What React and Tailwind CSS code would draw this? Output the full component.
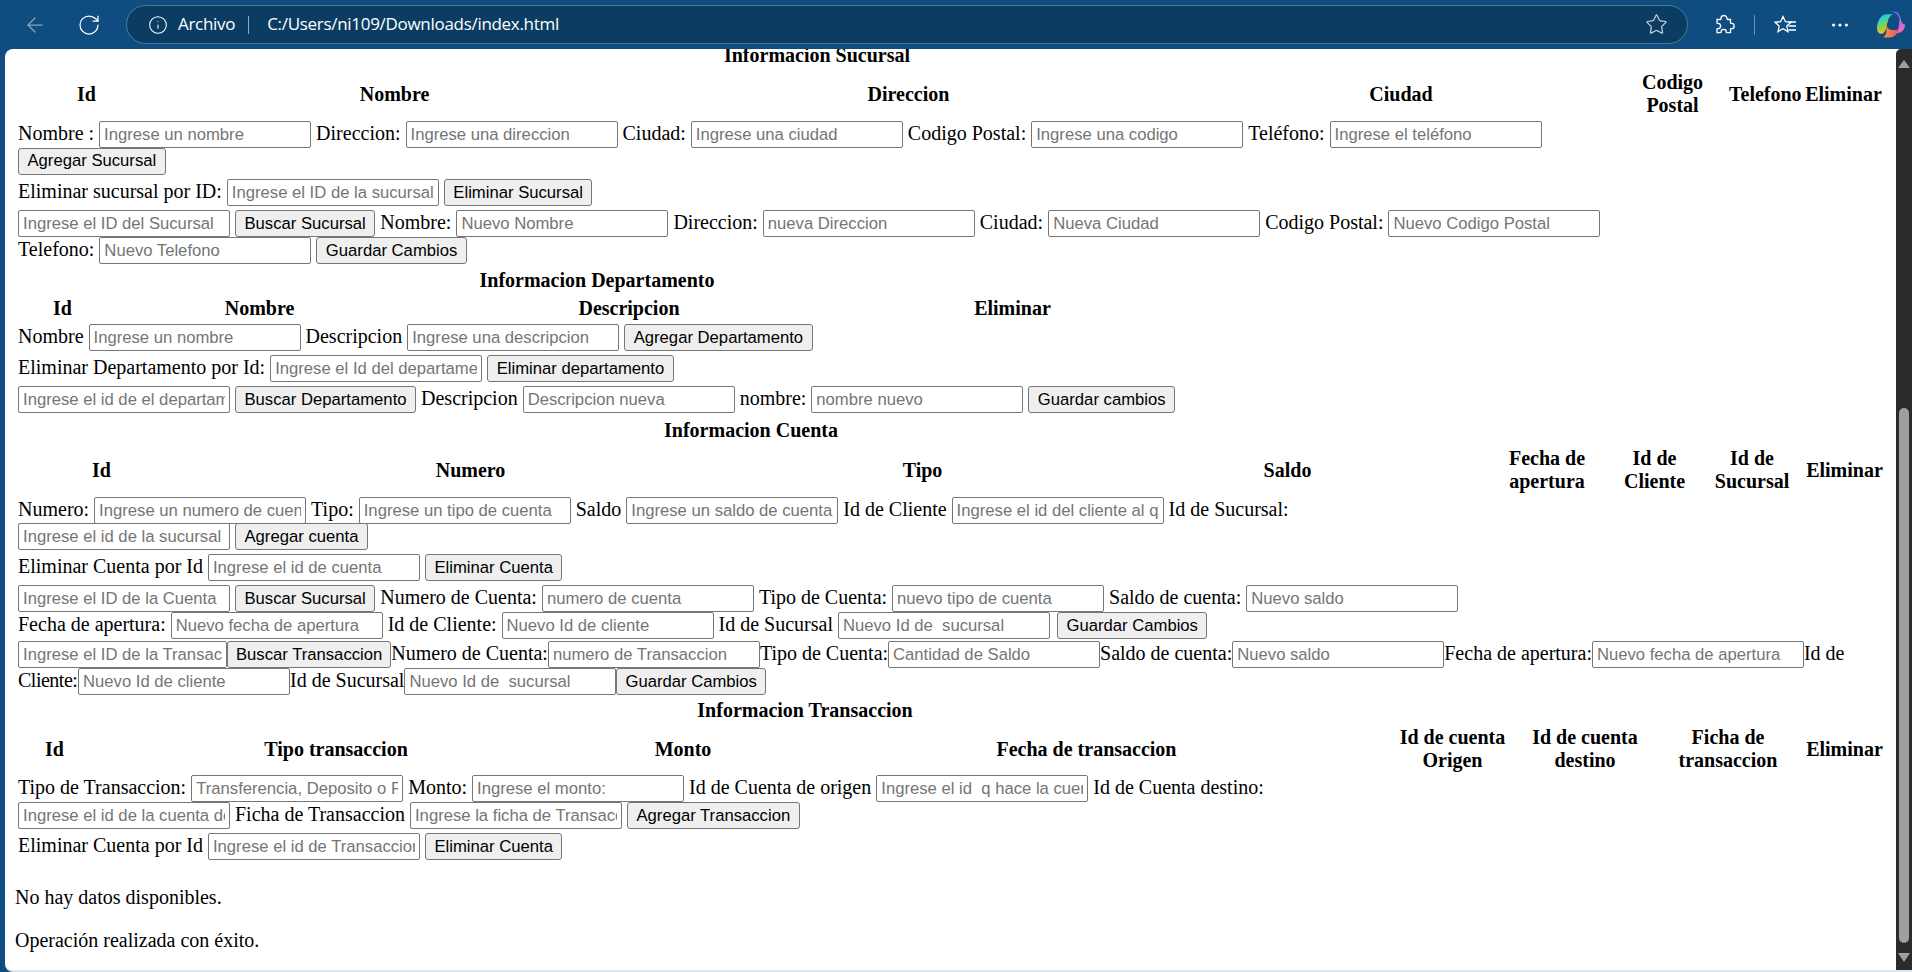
import React from "react";
import { ArrowLeft, RotateCw, Info, Star, MoreHorizontal } from "lucide-react";

const I = ({ p, narrow }) => (
  <input
    readOnly
    placeholder={p}
    className={`${narrow ? "w-[209px]" : "w-[212px]"} h-[27px] shrink-0 border border-[#767676] rounded-[2px] bg-white px-1 text-[16.67px] placeholder:text-[#757575] outline-none font-['Liberation_Sans',Arial,sans-serif]`}
  />
);
const B = ({ children, compact, className = "" }) => (
  <button className={`h-[27px] shrink-0 border border-[#767676] rounded-[3px] bg-[#efefef] ${compact ? "px-[8px]" : "px-[8.5px]"} text-[16.67px] text-black leading-none whitespace-nowrap font-['Liberation_Sans',Arial,sans-serif] ${className}`}>
    {children}
  </button>
);
const L = ({ children, tight, className = "" }) => (
  <div className={`flex items-baseline h-[27px] ml-[18px] whitespace-nowrap ${tight ? "gap-0" : "gap-[5px]"} ${className}`}>{children}</div>
);
const Caption = ({ w, children }) => (
  <div className="font-bold text-center h-[23px] leading-[23px]" style={{ width: w }}>{children}</div>
);
const Table = ({ cols, heads, w, className = "" }) => (
  <table className={`table-fixed border-separate border-spacing-[2px] ml-[16px] font-bold ${className}`} style={{ width: w }}>
    <colgroup>{cols.map((c, i) => <col key={i} style={{ width: c }} />)}</colgroup>
    <thead>
      <tr>
        {heads.map((h, i) => (
          <th key={i} className="p-px leading-[23px] py-[2px] text-center font-bold">{h}</th>
        ))}
      </tr>
    </thead>
  </table>
);

function Edge() {
  return (
    <div className="h-[49px] bg-[#0f4c7f] flex items-center shrink-0 text-white">
      <div className="w-[70px] flex justify-center opacity-50"><ArrowLeft size={24} strokeWidth={1.25} /></div>
      <div className="w-[38px] flex justify-center"><RotateCw size={24} strokeWidth={1.25} /></div>
      <div className="ml-[18px] h-[39px] w-[1562px] rounded-full bg-[#0b3d63] border border-[#4f7a9b] flex items-center text-[17px] font-['Open_Sans',sans-serif] tracking-[-0.3px]">
        <Info size={20} strokeWidth={1.25} className="ml-[21px]" />
        <span className="ml-[10px] -mt-[1px]">Archivo</span>
        <span className="ml-[13px] w-px h-[18px] bg-[#8fa9bf]" />
        <span className="ml-[18px] -mt-[1px]">C:/Users/ni109/Downloads/index.html</span>
        <Star size={23} strokeWidth={1.25} className="ml-auto mr-[19px] text-[#c8d4de]" />
      </div>
      <svg width="22" height="22" viewBox="0 0 22 22" fill="none" stroke="white" strokeWidth="1.3" className="ml-[25px]">
        <path d="M8 4.500a3 3 0 0 1 6 0c0 .6 0 .9.3 1h3.200v3.400c0 .3.500.4 1 .4a2.700 2.700 0 0 1 0 5.400c-.5 0-1 .1-1 .4v3.600h-3.800c-.4 0-.4-.4-.4-.8a2.600 2.600 0 0 0-5.200 0c0 .4 0 .8-.4.8H4v-3.600c0-.4.400-.4.900-.4a2.700 2.700 0 0 0 0-5.400c-.5 0-.9 0-.9-.4V5.500h3.700c.3 0 .3-.4.300-1z" />
      </svg>
      <span className="ml-[19px] w-px h-[20px] bg-[#6d93b0]" />
      <svg width="24" height="22" viewBox="0 0 24 22" fill="none" stroke="white" strokeWidth="1.3" className="ml-[18px]">
        <path d="M10 2.500l2.400 5.200 5.600.6-4.200 3.800 1.200 5.500-5-2.900-5 2.900 1.200-5.500L2 8.300l5.600-.6z" />
        <path d="M16 8h7M15.500 12h7.500M15.500 16h7.500" />
      </svg>
      <MoreHorizontal size={22} strokeWidth={1.5} className="ml-[32px]" />
      <svg width="28" height="27" viewBox="0 0 30 28" className="ml-[26px] mt-[-1px]">
        <defs>
          <linearGradient id="ca" x1="0" y1="0" x2="0.4" y2="1"><stop offset="0" stopColor="#2f9fe8" /><stop offset="0.35" stopColor="#37d6c0" /><stop offset="0.65" stopColor="#8fd13f" /><stop offset="1" stopColor="#f6c431" /></linearGradient>
          <linearGradient id="cb" x1="0" y1="0" x2="0.6" y2="1"><stop offset="0" stopColor="#1c6fe0" /><stop offset="0.5" stopColor="#9b6de8" /><stop offset="1" stopColor="#f06ac0" /></linearGradient>
          <linearGradient id="cc" x1="0" y1="0" x2="1" y2="0"><stop offset="0" stopColor="#f6a13a" /><stop offset="1" stopColor="#ee4f63" /></linearGradient>
        </defs>
        <path d="M10 3h8c-3 .5-5 2.500-6 6l-2.500 9.500C8.500 22 7 24 4.500 24 2 24 0 21.500 0 18 0 11 4 3 10 3z" fill="url(#ca)" />
        <path d="M13 0h6c3 0 4.500 2 5.500 5l1.500 5c1 3 2 4 4 4 0 5-3 9-8 9h-3c3-1.500 4-4 4.500-8l.5-6c.3-4-3-8-11-9z" fill="url(#cb)" />
        <path d="M10 13c.5 5 3 7 7 7h6c-1 4.500-5 8-10 8H5c3 0 4.500-2.500 5-6z" fill="url(#cc)" />
      </svg>
    </div>
  );
}

export default function App() {
  return (
    <div className="h-[972px] w-[1912px] overflow-hidden bg-[#0f4c7f] flex flex-col">
      <Edge />
      <div className="flex-1 ml-[5px] border-b-2 border-b-[#dfe7ee] flex rounded-tl-[8px] rounded-bl-[8px] overflow-hidden bg-white relative">
        <main className="flex-1 overflow-hidden font-['Liberation_Serif','Times_New_Roman',serif] text-[20px] leading-[23px] text-black">
          <div className="-ml-[5px] -mt-[5px]">
            <Caption w={1634}>Informacion Sucursal</Caption>
            <Table
              w={1869}
              cols={[137, 475, 549, 432, 107, 74, 79]}
              heads={["Id", "Nombre", "Direccion", "Ciudad", "Codigo Postal", "Telefono", "Eliminar"]}
            />
            <L><span>Nombre :</span><I p="Ingrese un nombre" /><span>Direccion:</span><I p="Ingrese una direccion" /><span>Ciudad:</span><I p="Ingrese una ciudad" /><span>Codigo Postal:</span><I p="Ingrese una codigo" /><span>Teléfono:</span><I p="Ingrese el teléfono" /></L>
            <L><B>Agregar Sucursal</B></L>
            <L className="mt-[4px]"><span>Eliminar sucursal por ID:</span><I p="Ingrese el ID de la sucursal" /><B>Eliminar Sucursal</B></L>
            <L className="mt-[4px]"><I p="Ingrese el ID del Sucursal" /><B>Buscar Sucursal</B><span>Nombre:</span><I p="Nuevo Nombre" /><span>Direccion:</span><I p="nueva Direccion" /><span>Ciudad:</span><I p="Nueva Ciudad" /><span>Codigo Postal:</span><I p="Nuevo Codigo Postal" /></L>
            <L><span>Telefono:</span><I p="Nuevo Telefono" /><B>Guardar Cambios</B></L>

            <div className="mt-[5px]"><Caption w={1194}>Informacion Departamento</Caption></div>
            <Table className="mt-[1px]" w={1163} cols={[89, 301, 434, 329]} heads={["Id", "Nombre", "Descripcion", "Eliminar"]} />
            <L><span>Nombre</span><I p="Ingrese un nombre" /><span>Descripcion</span><I p="Ingrese una descripcion" /><B>Agregar Departamento</B></L>
            <L className="mt-[4px]"><span>Eliminar Departamento por Id:</span><I p="Ingrese el Id del departamento" /><B>Eliminar departamento</B></L>
            <L className="mt-[4px]"><I p="Ingrese el id de el departamento" /><B>Buscar Departamento</B><span>Descripcion</span><I p="Descripcion nueva" /><span>nombre:</span><I p="nombre nuevo" /><B>Guardar cambios</B></L>

            <div className="mt-[6px]"><Caption w={1502}>Informacion Cuenta</Caption></div>
            <Table className="mt-[1px]" w={1870} cols={[167, 567, 333, 393, 122, 89, 102, 79]} heads={["Id", "Numero", "Tipo", "Saldo", "Fecha de apertura", "Id de Cliente", "Id de Sucursal", "Eliminar"]} />
            <L><span>Numero:</span><I p="Ingrese un numero de cuenta" /><span>Tipo:</span><I p="Ingrese un tipo de cuenta" /><span>Saldo</span><I p="Ingrese un saldo de cuenta" /><span>Id de Cliente</span><I p="Ingrese el id del cliente al que pertenece" /><span>Id de Sucursal:</span></L>
            <L className="-mt-[1px]"><I p="Ingrese el id de la sucursal" /><B>Agregar cuenta</B></L>
            <L className="mt-[4px]"><span>Eliminar Cuenta por Id</span><I p="Ingrese el id de cuenta" /><B>Eliminar Cuenta</B></L>
            <L className="mt-[4px]"><I p="Ingrese el ID de la Cuenta" /><B>Buscar Sucursal</B><span>Numero de Cuenta:</span><I p="numero de cuenta" /><span>Tipo de Cuenta:</span><I p="nuevo tipo de cuenta" /><span>Saldo de cuenta:</span><I p="Nuevo saldo" /></L>
            <L><span>Fecha de apertura:</span><I p="Nuevo fecha de apertura" /><span>Id de Cliente:</span><I p="Nuevo Id de cliente" /><span>Id de Sucursal</span><I p="Nuevo Id de  sucursal" /><B className="ml-[2px]">Guardar Cambios</B></L>
            <L tight className="mt-[2px]"><I narrow p="Ingrese el ID de la Transaccion" /><B compact>Buscar Transaccion</B><span>Numero de Cuenta:</span><I p="numero de Transaccion" /><span>Tipo de Cuenta:</span><I p="Cantidad de Saldo" /><span>Saldo de cuenta:</span><I p="Nuevo saldo" /><span>Fecha de apertura:</span><I p="Nuevo fecha de apertura" /><span>Id de</span></L>
            <L tight><span className="w-[60px] tracking-[-0.5px]">Cliente:</span><I p="Nuevo Id de cliente" /><span>Id de Sucursal</span><I p="Nuevo Id de  sucursal" /><B compact>Guardar Cambios</B></L>

            <div className="mt-[4px]"><Caption w={1610}>Informacion Transaccion</Caption></div>
            <Table className="-mb-[1px]" w={1870} cols={[73, 486, 204, 599, 129, 132, 150, 79]} heads={["Id", "Tipo transaccion", "Monto", "Fecha de transaccion", "Id de cuenta Origen", "Id de cuenta destino", "Ficha de transaccion", "Eliminar"]} />
            <L><span>Tipo de Transaccion:</span><I p="Transferencia, Deposito o Retiro" /><span>Monto:</span><I p="Ingrese el monto:" /><span>Id de Cuenta de origen</span><I p="Ingrese el id  q hace la cuenta" /><span>Id de Cuenta destino:</span></L>
            <L><I p="Ingrese el id de la cuenta destino" /><span>Ficha de Transaccion</span><I p="Ingrese la ficha de Transaccion" /><B>Agregar Transaccion</B></L>
            <L className="mt-[4px]"><span>Eliminar Cuenta por Id</span><I p="Ingrese el id de Transaccion" /><B>Eliminar Cuenta</B></L>

            <p className="ml-[15px] mt-[26px]">No hay datos disponibles.</p>
            <p className="ml-[15px] mt-[20px]">Operación realizada con éxito.</p>
          </div>
        </main>
        <aside className="w-[16px] shrink-0 bg-[#2b2b2b] rounded-tl-[5px] flex flex-col items-center">
          <div className="mt-[11px] w-0 h-0 border-x-[6px] border-x-transparent border-b-[8px] border-b-[#9f9f9f]" />
          <div className="mt-[340px] w-[10px] h-[535px] rounded-full bg-[#9f9f9f]" />
          <div className="mt-[10px] w-0 h-0 border-x-[6px] border-x-transparent border-t-[9px] border-t-[#9f9f9f]" />
        </aside>
      </div>
    </div>
  );
}
